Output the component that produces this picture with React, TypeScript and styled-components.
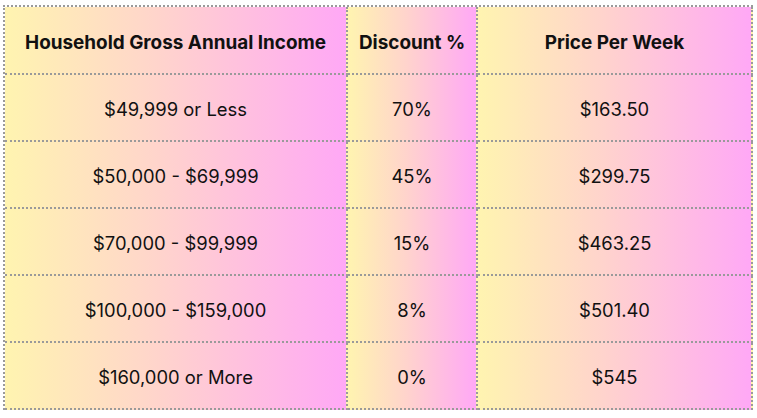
import React from "react";
import styled, { createGlobalStyle } from "styled-components";

const Global = createGlobalStyle`
  html, body { margin: 0; padding: 0; background: #ffffff; }
  body { font-family: Inter, "Open Sans", "Liberation Sans", sans-serif; }
`;

const Page = styled.div`
  padding: 5px 4px 0 3px;
`;

const Grid = styled.div`
  display: grid;
  grid-template-columns: 343px 130px 275px;
  grid-template-rows: 68px repeat(5, 67px);
  border-top: 2px dotted #9a9a9a;
  border-left: 2px dotted #9a9a9a;
  width: 748px;
`;

const Cell = styled.div<{ $head?: boolean }>`
  display: flex;
  align-items: center;
  justify-content: center;
  border-right: 2px dotted #9a9a9a;
  border-bottom: 2px dotted #9a9a9a;
  background: linear-gradient(90deg, #fff4b0 0%, #ffd4cc 45%, #ffa8f6 100%);
  color: #111111;
  font-size: ${(p) => (p.$head ? "18.9px" : "18.4px")};
  font-weight: ${(p) => (p.$head ? 700 : 400)};
  padding-top: ${(p) => (p.$head ? "4px" : "3px")};
`;

const rows = [
  ["$49,999 or Less", "70%", "$163.50"],
  ["$50,000 - $69,999", "45%", "$299.75"],
  ["$70,000 - $99,999", "15%", "$463.25"],
  ["$100,000 - $159,000", "8%", "$501.40"],
  ["$160,000 or More", "0%", "$545"],
];

export default function App() {
  return (
    <Page>
      <Global />
      <Grid>
        <Cell $head>Household Gross Annual Income</Cell>
        <Cell $head>Discount %</Cell>
        <Cell $head>Price Per Week</Cell>
        {rows.map((r) =>
          r.map((v, i) => <Cell key={r[0] + i}>{v}</Cell>)
        )}
      </Grid>
    </Page>
  );
}
